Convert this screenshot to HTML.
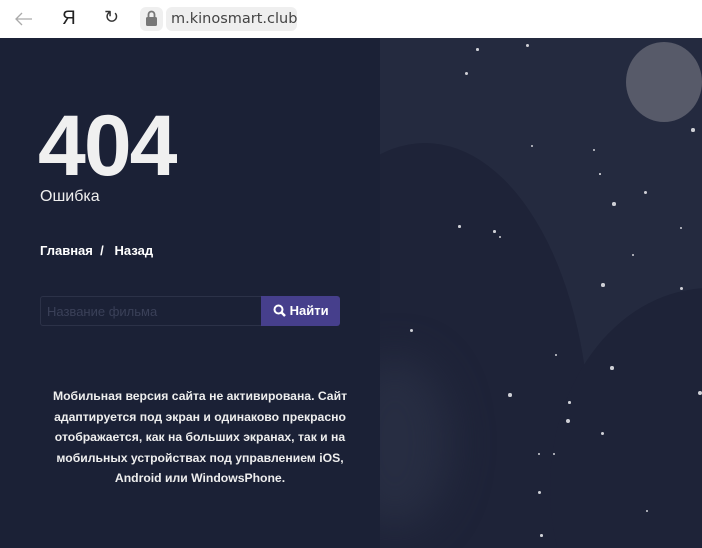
<!DOCTYPE html>
<html><head><meta charset="utf-8"><style>
*{margin:0;padding:0;box-sizing:border-box}
html,body{width:702px;height:548px;overflow:hidden}
body{background:#1b2136;font-family:"Liberation Sans",Arial,Helvetica,sans-serif;position:relative}
.bar{position:absolute;left:0;top:0;width:702px;height:38px;background:#fff}
.url{position:absolute;left:166px;top:7px;width:131px;height:24px;background:#efefef;border-radius:6px;color:#444;padding:3px 5px;font-family:"DejaVu Sans",sans-serif;font-size:14.5px;line-height:18px}
.lock{position:absolute;left:140px;top:7px;width:23px;height:24px;background:#efefef;border-radius:6px}
.right{position:absolute;left:380px;top:38px;width:322px;height:510px;background:#242a3f;overflow:hidden}
.star{position:absolute;border-radius:50%;background:#cfd0d6}
</style></head><body>
<div class="bar">
<svg style="position:absolute;left:14px;top:11px" width="20" height="16"><path d="M18 8H2M8 2L2 8l6 6" stroke="#aaa" stroke-width="1.3" fill="none"/></svg>
<div style="position:absolute;left:62px;top:8px;font-size:19px;color:#222">Я</div>
<div style="position:absolute;left:104px;top:7px;font-size:18px;color:#333">↻</div>
<div class="lock"><svg width="23" height="24"><rect x="6" y="10" width="11" height="9" rx="1.5" fill="#777"/><path d="M8.5 10V7.5a3 3 0 0 1 6 0V10" stroke="#777" stroke-width="1.8" fill="none"/></svg></div>
<div class="url">m.kinosmart.club</div>
</div>
<div class="right">
<div style="position:absolute;left:-120px;top:105px;width:330px;height:600px;border-radius:50%;background:#1e2338"></div>
<div style="position:absolute;left:170px;top:250px;width:320px;height:400px;border-radius:50%;background:#1e2338"></div>
<div style="position:absolute;left:-40px;top:320px;width:110px;height:170px;border-radius:50%;background:#272d42;filter:blur(20px)"></div>
<div style="position:absolute;left:246px;top:4px;width:76px;height:80px;border-radius:50%;background:#575a69"></div>
</div>
<div class="star" style="left:525.5px;top:43.5px;width:3px;height:3px"></div>
<div class="star" style="left:476px;top:48px;width:2.5px;height:2.5px"></div>
<div class="star" style="left:464.5px;top:71.5px;width:3px;height:3px"></div>
<div class="star" style="left:691px;top:128px;width:3.5px;height:3.5px"></div>
<div class="star" style="left:531px;top:145px;width:2px;height:2px"></div>
<div class="star" style="left:593px;top:149px;width:2px;height:2px"></div>
<div class="star" style="left:599px;top:173px;width:1.5px;height:1.5px"></div>
<div class="star" style="left:643.5px;top:190.5px;width:3px;height:3px"></div>
<div class="star" style="left:612px;top:202px;width:3.5px;height:3.5px"></div>
<div class="star" style="left:680px;top:227px;width:2px;height:2px"></div>
<div class="star" style="left:458px;top:225px;width:2.5px;height:2.5px"></div>
<div class="star" style="left:493px;top:230px;width:2.5px;height:2.5px"></div>
<div class="star" style="left:499px;top:236px;width:2px;height:2px"></div>
<div class="star" style="left:632px;top:254px;width:2px;height:2px"></div>
<div class="star" style="left:601px;top:283px;width:3.5px;height:3.5px"></div>
<div class="star" style="left:679.5px;top:286.5px;width:3px;height:3px"></div>
<div class="star" style="left:409.5px;top:328.5px;width:3px;height:3px"></div>
<div class="star" style="left:555px;top:354px;width:2px;height:2px"></div>
<div class="star" style="left:610px;top:366px;width:3.5px;height:3.5px"></div>
<div class="star" style="left:698px;top:391px;width:4px;height:4px"></div>
<div class="star" style="left:508px;top:393px;width:3.5px;height:3.5px"></div>
<div class="star" style="left:568px;top:401px;width:2.5px;height:2.5px"></div>
<div class="star" style="left:566px;top:419px;width:4px;height:4px"></div>
<div class="star" style="left:600.5px;top:431.5px;width:3px;height:3px"></div>
<div class="star" style="left:538px;top:453px;width:2px;height:2px"></div>
<div class="star" style="left:553px;top:453px;width:2px;height:2px"></div>
<div class="star" style="left:537.5px;top:490.5px;width:3px;height:3px"></div>
<div class="star" style="left:540px;top:534px;width:2.5px;height:2.5px"></div>
<div class="star" style="left:646px;top:510px;width:2px;height:2px"></div>
<div style="position:absolute;left:38px;top:102px;font-size:86px;line-height:88px;font-weight:bold;color:#f0f0f0;letter-spacing:-2px">404</div>
<div style="position:absolute;left:40px;top:188px;font-size:16px;color:#eee">Ошибка</div>
<div style="position:absolute;left:40px;top:243px;font-size:13px;color:#fff;font-weight:bold;white-space:pre">Главная  /   Назад</div>
<div style="position:absolute;left:40px;top:296px;width:222px;height:30px;border:1px solid #2c3248;border-radius:3px 0 0 3px;background:#1b2136;font-size:13px;color:#3a4058;padding:7px 6px">Название фильма</div>
<div style="position:absolute;left:261px;top:296px;width:79px;height:30px;background:#463f8c;border-radius:0 3px 3px 0;color:#fff;font-weight:bold;font-size:13px;padding:7px 0 0 12px;white-space:nowrap">
<svg width="13" height="13" style="vertical-align:-2px"><circle cx="5.5" cy="5.5" r="4" stroke="#fff" stroke-width="2" fill="none"/><path d="M8.5 8.5L12 12" stroke="#fff" stroke-width="2.5"/></svg> Найти</div>
<div style="position:absolute;left:20px;top:386px;width:360px;text-align:center;font-size:12.2px;line-height:20.5px;color:#eee;font-weight:bold;white-space:nowrap">Мобильная версия сайта не активирована. Сайт<br>адаптируется под экран и одинаково прекрасно<br>отображается, как на больших экранах, так и на<br>мобильных устройствах под управлением iOS,<br>Android или WindowsPhone.</div>
</body></html>
